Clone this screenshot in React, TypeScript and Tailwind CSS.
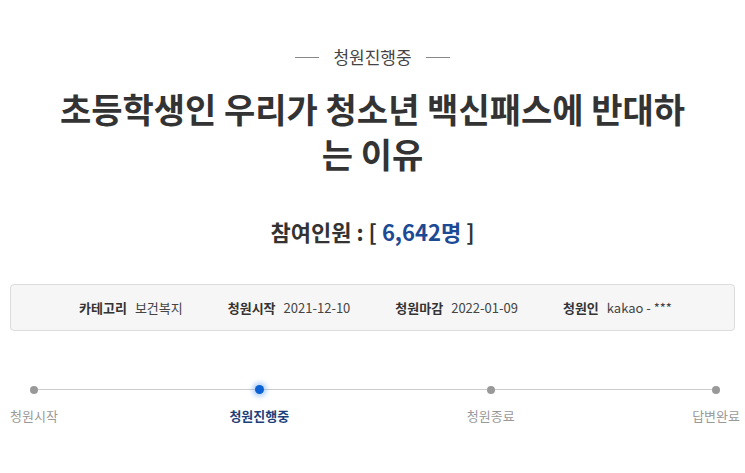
const steps = [
  { label: '청원시작', active: false },
  { label: '청원진행중', active: true },
  { label: '청원종료', active: false },
  { label: '답변완료', active: false },
];

const info = [
  { label: '카테고리', value: '보건복지' },
  { label: '청원시작', value: '2021-12-10' },
  { label: '청원마감', value: '2022-01-09' },
  { label: '청원인', value: 'kakao - ***' },
];

export default function App() {
  return (
    <div
      className="w-[745px] h-[473px] bg-white text-[#333] overflow-hidden"
      style={{ fontFamily: '"Noto Sans CJK KR", "Noto Sans", sans-serif' }}
    >
      {/* status heading */}
      <div className="flex items-center justify-center gap-[14px] pt-[43px]">
        <span className="w-[24px] h-px bg-[#888]" />
        <span className="text-[17px] leading-[28px] text-[#444]">청원진행중</span>
        <span className="w-[24px] h-px bg-[#888]" />
      </div>

      {/* title */}
      <h1 className="mx-auto mt-[15px] w-[640px] text-center text-[34px] leading-[45px] font-bold text-[#333]">
        초등학생인 우리가 청소년 백신패스에 반대하는 이유
      </h1>

      {/* participants */}
      <p className="mt-[38px] text-center text-[22px] leading-[34px] font-bold text-[#333]">
        참여인원 : [ <span className="text-[#1c4a94]">6,642명</span> ]
      </p>

      {/* info box */}
      <div className="mx-[10px] mt-[36px] h-[47px] rounded-[4px] border border-[#dcdcdc] bg-[#f6f6f6] flex items-center justify-center gap-[45px] pl-[6px] text-[13px]">
        {info.map((it) => (
          <div key={it.label} className="flex items-center gap-[8px]">
            <span className="font-bold text-[#333]">{it.label}</span>
            <span className="text-[#444]">{it.value}</span>
          </div>
        ))}
      </div>

      {/* progress */}
      <div className="relative mt-[53px] pl-[10px] pr-[5px]">
        <div className="absolute left-[34px] right-[31px] top-[5px] h-px bg-[#cccccc]" />
        <div className="relative flex justify-between">
          {steps.map((s, i) => (
            <div
              key={s.label}
              className={
                i === 1
                  ? 'flex flex-col items-center -ml-[6px]'
                  : i === 3
                    ? 'flex flex-col items-center -mr-[0px]'
                    : 'flex flex-col items-center'
              }
            >
              <div className="h-[11px] flex items-center justify-center">
                {s.active ? (
                  <span className="w-[9px] h-[9px] rounded-full bg-[#0a62d4] shadow-[0_0_4px_3px_rgba(60,140,240,0.35)]" />
                ) : (
                  <span className="w-[8px] h-[8px] rounded-full bg-[#999]" />
                )}
              </div>
              <span
                className={
                  s.active
                    ? 'mt-[12px] text-[13px] leading-[18px] font-bold text-[#1d3f7a]'
                    : 'mt-[12px] text-[13px] leading-[18px] text-[#999]'
                }
              >
                {s.label}
              </span>
            </div>
          ))}
        </div>
      </div>
    </div>
  );
}
